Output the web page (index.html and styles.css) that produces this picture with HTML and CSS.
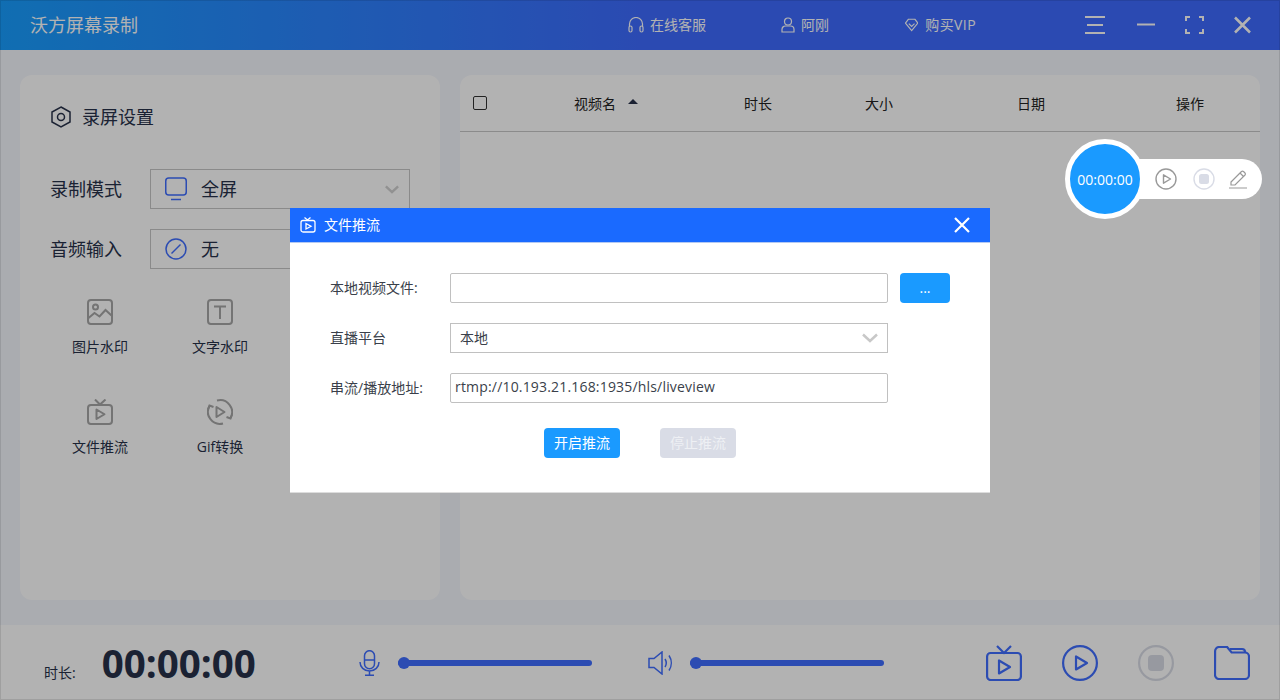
FILE: index.html
```html
<!DOCTYPE html>
<html lang="en">
<head>
  <meta charset="UTF-8">
  <title>沃方屏幕录制</title>
  <link rel="stylesheet" href="styles.css">
</head>
<body>
  <div class="app">
    <header class="topbar">
      <div class="app-title">沃方屏幕录制</div>
      <nav class="top-nav">
        <a class="top-link">
          <svg width="16" height="16" viewBox="0 0 16 16" fill="none" stroke="currentColor" stroke-width="1.2"><path d="M1.5 10V7a6.500 6.500 0 0 1 13 0v3"/><rect x="1" y="9" width="3" height="6" rx="1.500"/><rect x="12" y="9" width="3" height="6" rx="1.500"/></svg>
          在线客服
        </a>
        <a class="top-link">
          <svg width="14" height="16" viewBox="0 0 14 16" fill="none" stroke="currentColor" stroke-width="1.2"><circle cx="7" cy="4.500" r="3.500"/><path d="M1 15v-2.500A3.500 3.500 0 0 1 4.500 9h5a3.500 3.500 0 0 1 3.500 3.500V15z"/></svg>
          阿刚
        </a>
        <a class="top-link vip-link">
          <svg width="14" height="14" viewBox="0 0 14 14" fill="none" stroke="currentColor" stroke-width="1.2"><path d="M3.500 1h7L13.500 5 7 13 .5 5z"/><path d="M4 5.500 7 8.500l3-3"/></svg>
          购买VIP
        </a>
      </nav>
      <div class="win-btns">
        <svg width="20" height="18" viewBox="0 0 20 18" fill="none" stroke="currentColor" stroke-width="2"><path d="M0 1h20M2 9h16M0 17h20"/></svg>
        <svg width="20" height="18" viewBox="0 0 20 18" fill="none" stroke="currentColor" stroke-width="2"><path d="M1 8.500h18"/></svg>
        <svg width="20" height="18" viewBox="0 0 20 18" fill="none" stroke="currentColor" stroke-width="2"><path d="M1 5V1h4M14 1h4v4M18 13v4h-4M5 17H1v-4"/></svg>
        <svg width="20" height="18" viewBox="0 0 20 18" fill="none" stroke="currentColor" stroke-width="2.500"><path d="M3 1.500l15 15M18 1.500l-15 15"/></svg>
      </div>
    </header>

    <main class="content">
      <section class="panel settings">
        <h2 class="settings-title">
          <svg width="22" height="22" viewBox="0 0 22 22" fill="none" stroke="currentColor" stroke-width="1.500"><path d="M11 1l9 5v10l-9 5-9-5V6z"/><circle cx="11" cy="11" r="3.500"/></svg>
          录屏设置
        </h2>
        <div class="setting-row">
          <label>录制模式</label>
          <div class="fake-select">
            <svg class="blue-icon" width="22" height="24" viewBox="0 0 22 24" fill="none" stroke="currentColor" stroke-width="1.500"><rect x=".75" y="1" width="20.500" height="17" rx="3"/><path d="M6 22.500h10"/></svg>
            <span>全屏</span>
            <svg class="chevron" width="14" height="9" viewBox="0 0 16 10" fill="none" stroke="currentColor" stroke-width="2.800"><path d="M1 1.500l7 6.500 7-6.500"/></svg>
          </div>
        </div>
        <div class="setting-row">
          <label>音频输入</label>
          <div class="fake-select">
            <svg class="blue-icon" width="22" height="22" viewBox="0 0 22 22" fill="none" stroke="currentColor" stroke-width="1.500"><circle cx="11" cy="11" r="10"/><path d="M6.500 15.500l9-9"/></svg>
            <span>无</span>
          </div>
        </div>
        <div class="tools">
          <div class="tool">
            <svg width="26" height="26" viewBox="0 0 26 26" fill="none" stroke="currentColor" stroke-width="2"><rect x="1" y="1" width="24" height="24" rx="3"/><circle cx="8.500" cy="8" r="2.500"/><path d="M1.500 19l6-5 5 3.500 6-6.500 6 5.500"/></svg>
            <span>图片水印</span>
          </div>
          <div class="tool">
            <svg width="26" height="26" viewBox="0 0 26 26" fill="none" stroke="currentColor" stroke-width="2"><rect x="1" y="1" width="24" height="24" rx="3"/><path d="M7 7.500h12M13 7.500V20"/></svg>
            <span>文字水印</span>
          </div>
          <div class="tool-gap"></div>
          <div class="tool">
            <svg width="26" height="26" viewBox="0 0 26 26" fill="none" stroke="currentColor" stroke-width="2"><path d="M8 .5l5 5 5.500-5"/><rect x="1" y="6" width="24" height="19" rx="3"/><path d="M9.500 10.500v9.500l8-4.750z" stroke-linejoin="round"/></svg>
            <span>文件推流</span>
          </div>
          <div class="tool">
            <svg width="26" height="26" viewBox="0 0 26 26" fill="none" stroke="currentColor" stroke-width="2"><path d="M10 1.500A12 12 0 0 1 23.500 19M16 24.500A12 12 0 0 1 2.500 7"/><path d="M1 10.500l1.500-4 4 1.500M25 15.500l-1.500 4-4-1.500"/><path d="M9.500 8v10l8-5z" stroke-linejoin="round"/></svg>
            <span>Gif转换</span>
          </div>
        </div>
      </section>

      <section class="panel files">
        <div class="file-head">
          <div><span class="checkbox"></span></div>
          <div class="name-col">视频名<span class="caret"></span></div>
          <div>时长</div>
          <div>大小</div>
          <div>日期</div>
          <div>操作</div>
        </div>
      </section>
    </main>

    <footer class="bottombar">
      <div class="duration">
        <span class="duration-label">时长:</span>
        <span class="duration-value">00:00:00</span>
      </div>
      <svg class="blue-icon mic" width="21" height="26" viewBox="0 0 21 26" fill="none" stroke="currentColor" stroke-width="1.500"><rect x="5.500" y=".7" width="10" height="18" rx="5"/><path d="M5.500 10h10M1 12c0 5 4 9 9.500 9s9.500-4 9.500-9M10.500 21v4.300M6 25.300h9"/></svg>
      <div class="slider"></div>
      <svg class="blue-icon speaker" width="26" height="24" viewBox="0 0 26 24" fill="none" stroke="currentColor" stroke-width="1.500"><path d="M1 7.500h5L14 1v22l-8-6.500H1z"/><path d="M17 8c1.600 2.500 1.600 5.500 0 8M21 4.500c3 4.500 3 10.500 0 15"/></svg>
      <div class="slider"></div>
      <div class="bottom-actions">
        <svg class="blue-icon" width="36" height="36" viewBox="0 0 36 36" fill="none" stroke="currentColor" stroke-width="2.200"><path d="M11 1l7 7 7-7"/><rect x="1.100" y="8" width="33.800" height="27" rx="3.500"/><path d="M13 15.500v13l11-6.500z" stroke-linejoin="round"/></svg>
        <svg class="blue-icon" width="36" height="36" viewBox="0 0 36 36" fill="none" stroke="currentColor" stroke-width="2.200"><circle cx="18" cy="18" r="16.900"/><path d="M14 11.500v13l11-6.500z" stroke-linejoin="round"/></svg>
        <svg class="stop-off" width="36" height="36" viewBox="0 0 36 36" fill="none"><circle cx="18" cy="18" r="16.900" stroke="currentColor" stroke-width="2.200"/><rect x="10" y="10" width="16" height="16" rx="4" fill="currentColor"/></svg>
        <svg class="blue-icon" width="36" height="34" viewBox="0 0 36 34" fill="none" stroke="currentColor" stroke-width="2.200"><path d="M1.100 5a4 4 0 0 1 4-4h8l4.500 5.500H31a4 4 0 0 1 4 4V29a4 4 0 0 1-4 4H5a4 4 0 0 1-4-4z"/><path d="M16 3h12a3 3 0 0 1 3 3v.5"/></svg>
      </div>
    </footer>

    <div class="mask">
      <div class="dialog">
        <div class="dialog-head">
          <svg width="16" height="16" viewBox="0 0 16 16" fill="none" stroke="currentColor" stroke-width="1.300"><path d="M4.500.5l3 2.500 3-2.500"/><rect x="1" y="3.500" width="14" height="11.500" rx="2"/><path d="M6 6.500v5.500l5-2.750z"/></svg>
          <span class="dialog-title">文件推流</span>
          <svg class="dialog-close" width="18" height="18" viewBox="0 0 18 18" fill="none" stroke="currentColor" stroke-width="2.200"><path d="M2 2l14 14M16 2L2 16"/></svg>
        </div>
        <div class="dialog-body">
          <div class="form-row">
            <label>本地视频文件:</label>
            <input class="text-input" type="text">
            <button class="btn btn-more">...</button>
          </div>
          <div class="form-row">
            <label>直播平台</label>
            <div class="platform-select">
              <span>本地</span>
              <svg width="16" height="10" viewBox="0 0 16 10" fill="none" stroke="currentColor" stroke-width="2.500"><path d="M1 1.500l7 6.500 7-6.500"/></svg>
            </div>
          </div>
          <div class="form-row">
            <label>串流/播放地址:</label>
            <input class="text-input" type="text" value="rtmp://10.193.21.168:1935/hls/liveview">
          </div>
          <div class="dialog-actions">
            <button class="btn btn-start">开启推流</button>
            <button class="btn btn-stop">停止推流</button>
          </div>
        </div>
      </div>
    </div>

    <div class="float-bar">
      <div class="float-time">00:00:00</div>
      <div class="float-icons">
        <svg class="ic-gray" width="22" height="22" viewBox="0 0 22 22" fill="none" stroke="currentColor" stroke-width="1.400"><circle cx="11" cy="11" r="10"/><path d="M8.500 6.800v8.400l7-4.200z" stroke-linejoin="round"/></svg>
        <svg class="ic-off" width="22" height="22" viewBox="0 0 22 22" fill="none"><circle cx="11" cy="11" r="10" stroke="currentColor" stroke-width="1.400"/><rect x="6" y="6" width="10" height="10" rx="2.500" fill="currentColor"/></svg>
        <svg class="ic-gray ic-edit" width="20" height="20" viewBox="0 0 20 20" fill="none" stroke="currentColor" stroke-width="1.200"><path d="M3 13L13.500 2.500a1.500 1.500 0 0 1 2 0l1.500 1.500a1.500 1.500 0 0 1 0 2L7 16H3z"/><path d="M12 4l3.500 3.500M1 19h18"/></svg>
      </div>
    </div>
  </div>
</body>
</html>
```

FILE: styles.css
```css
* {
  box-sizing: border-box;
}

body {
  margin: 0;
  font-family: "Open Sans", "Noto Sans CJK SC", sans-serif;
  overflow: hidden;
}

.app {
  position: relative;
  width: 1280px;
  height: 700px;
  display: flex;
  flex-direction: column;
  background-color: #f4f6fd;
  color: #27314a;
}

/* top bar */
.topbar {
  height: 50px;
  display: flex;
  align-items: center;
  padding: 0 28px 0 30px;
  color: #fff;
  background: linear-gradient(90deg, #189eff 0, #3e6bff 50%);
}

.app-title {
  flex: 1;
  font-size: 18px;
  line-height: 24px;
}

.top-nav {
  display: flex;
  gap: 75px;
  margin-right: 109px;
}

.top-link {
  display: flex;
  align-items: center;
  gap: 6px;
  font-size: 14px;
  line-height: 20px;
}

.vip-link {
  width: 71px;
  margin-left: 1px;
  gap: 7px;
  letter-spacing: 0.4px;
  white-space: nowrap;
}

.win-btns {
  display: grid;
  grid-template-columns: 51px 49px 47px 20px;
  align-items: center;
}

.win-btns svg {
  display: block;
}

/* main area */
.content {
  flex: 1;
  display: flex;
  gap: 20px;
  padding: 25px 20px;
}

.panel {
  background-color: #fff;
  border-radius: 12px;
}

.settings {
  width: 420px;
  padding: 30px;
}

.settings-title {
  display: flex;
  align-items: center;
  gap: 10px;
  margin: 0 0 40px;
  font-size: 18px;
  font-weight: normal;
  line-height: 24px;
}

.setting-row {
  display: flex;
  align-items: center;
  margin-bottom: 20px;
  font-size: 18px;
}

.setting-row label {
  width: 100px;
  padding-bottom: 2px;
}

.fake-select {
  width: 260px;
  height: 40px;
  display: flex;
  align-items: center;
  gap: 14px;
  padding: 0 10px 0 14px;
  border: 1px solid #c6c6c6;
}

.fake-select span {
  padding-bottom: 2px;
}

.blue-icon {
  color: #3f6dff;
  flex-shrink: 0;
}

.chevron {
  margin-left: auto;
  color: #d0d0d0;
}

.tools {
  display: grid;
  grid-template-columns: repeat(3, 120px);
  grid-auto-rows: 100px;
  margin: 30px 0 0 -10px;
}

.tool {
  display: flex;
  flex-direction: column;
  align-items: center;
  gap: 12px;
  font-size: 14px;
  line-height: 20px;
}

.tool svg {
  color: #a6a6a6;
}

.files {
  flex: 1;
}

.file-head {
  height: 57px;
  display: grid;
  grid-template-columns: 114px 170px 121px 152px 159px auto;
  align-items: center;
  padding-bottom: 1px;
  border-bottom: 1px solid #c8c8c8;
  font-size: 14px;
  color: #222;
}

.checkbox {
  display: block;
  width: 14px;
  height: 14px;
  margin-left: 13px;
  border: 1px solid #333;
  border-radius: 2px;
}

.name-col {
  display: flex;
  align-items: center;
}

.caret {
  width: 0;
  height: 0;
  margin: -3px 0 0 12px;
  border-left: 5px solid transparent;
  border-right: 5px solid transparent;
  border-bottom: 5px solid #27314a;
}

/* bottom bar */
.bottombar {
  height: 75px;
  display: flex;
  align-items: center;
  padding-left: 44px;
  background-color: #fff;
}

.duration {
  width: 315px;
  display: flex;
  align-items: baseline;
  gap: 26px;
}

.duration-label {
  font-size: 14px;
}

.duration-value {
  font-size: 38.500px;
  font-weight: bold;
  line-height: 52px;
}

.mic {
  margin-right: 18px;
}

.speaker {
  margin: 0 16px 0 56px;
}

.slider {
  position: relative;
  width: 194px;
  height: 6px;
  border-radius: 3px;
  background-color: #3f6dff;
}

.slider::before {
  content: "";
  position: absolute;
  left: 0;
  top: -3px;
  width: 12px;
  height: 12px;
  border-radius: 50%;
  background-color: #3f6dff;
}

.bottom-actions {
  display: flex;
  align-items: center;
  gap: 40px;
  margin-left: 102px;
}

.stop-off {
  color: #d9dce6;
}

/* modal */
.mask {
  position: absolute;
  inset: 0;
  display: flex;
  align-items: center;
  justify-content: center;
  padding-top: 1px;
  background-color: rgba(0, 0, 0, 0.3);
  border: 1px solid rgba(0, 0, 0, 0.1);
}

.dialog {
  width: 700px;
  height: 285px;
  background-color: #fff;
  border-bottom: 1px solid #ddd;
}

.dialog-head {
  height: 35px;
  display: flex;
  align-items: center;
  padding: 0 19px 0 10px;
  color: #fff;
  background-color: #1a6aff;
  border-bottom: 1px solid #b4c9f2;
}

.dialog-title {
  flex: 1;
  margin-left: 8px;
  font-size: 14px;
  line-height: 20px;
}

.dialog-body {
  padding: 30px 40px 0;
}

.form-row {
  display: flex;
  align-items: center;
  height: 30px;
  margin-bottom: 20px;
  font-size: 14px;
}

.form-row label {
  width: 120px;
  padding-bottom: 2px;
  color: #3a3f4a;
}

.text-input {
  width: 438px;
  height: 30px;
  padding: 0 4px 3px;
  border: 1px solid #c0c0c0;
  border-radius: 2px;
  font: inherit;
  letter-spacing: 0.18px;
  color: #3a3f4a;
  outline: none;
}

.platform-select {
  width: 438px;
  height: 30px;
  display: flex;
  align-items: center;
  justify-content: space-between;
  padding: 0 9px;
  border: 1px solid #c0c0c0;
  color: #3a3f4a;
}

.platform-select span {
  padding-bottom: 2px;
}

.platform-select svg {
  color: #c8c8c8;
}

.btn {
  height: 30px;
  border: none;
  border-radius: 4px;
  padding: 0 0 2px;
  font: inherit;
  font-size: 14px;
  color: #fff;
}

.btn-more {
  width: 50px;
  margin-left: 12px;
  background-color: #1a9aff;
}

.dialog-actions {
  display: flex;
  justify-content: center;
  gap: 40px;
  margin-top: 25px;
}

.btn-start,
.btn-stop {
  width: 76px;
}

.btn-start {
  background-color: #1a9aff;
}

.btn-stop {
  background-color: #d9dce6;
  color: #eef0f4;
}

/* floating recorder */
.float-bar {
  position: absolute;
  left: 1065px;
  top: 139px;
  width: 197px;
  height: 80px;
  display: flex;
  align-items: center;
}

.float-time {
  position: relative;
  width: 80px;
  height: 80px;
  display: flex;
  align-items: center;
  justify-content: center;
  border: 5px solid #fff;
  border-radius: 50%;
  background-color: #1a9aff;
  color: #fff;
  font-size: 14px;
  z-index: 1;
}

.float-icons {
  height: 40px;
  flex: 1;
  display: flex;
  align-items: center;
  gap: 16px;
  margin-left: -20px;
  padding-left: 30px;
  background-color: #fff;
  border-radius: 0 20px 20px 0;
}

.ic-gray {
  color: #999;
}

.ic-off {
  color: #d9dce6;
}

.ic-edit {
  margin-left: -3px;
}
```
